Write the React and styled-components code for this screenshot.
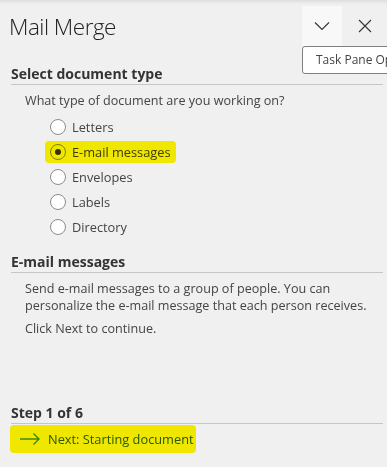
import React from 'react'
import styled, { createGlobalStyle } from 'styled-components'

const GlobalStyle = createGlobalStyle`
  html, body {
    margin: 0;
    padding: 0;
    background: #f0f0f0;
    overflow: hidden;
  }
  body {
    font-family: "Segoe UI", "Open Sans", "Noto Sans", sans-serif;
    color: #444;
  }
`

const Pane = styled.div`
  position: relative;
  width: 387px;
  height: 467px;
  background: #f0f0f0;
  box-shadow: inset 0 4px 4px -3px rgba(0, 0, 0, 0.12);
  display: flex;
  flex-direction: column;
`

const Header = styled.div`
  height: 46px;
  display: flex;
  align-items: flex-end;
`

const Title = styled.h1`
  margin: 0 0 2px 9px;
  flex: 1;
  font-size: 22.5px;
  font-weight: 300;
  line-height: 34px;
  color: #222;
  letter-spacing: -0.5px;
`

const IconButton = styled.button`
  width: ${p => p.$w || 40}px;
  height: 40px;
  border: none;
  padding: 0;
  margin: 0;
  background: ${p => (p.$hover ? '#f8f8f8' : 'transparent')};
  display: flex;
  align-items: center;
  justify-content: center;
  color: #333;
`

const Tooltip = styled.div`
  position: absolute;
  top: 46px;
  left: 302px;
  height: 26px;
  padding: 0 8px 0 13px;
  background: #fff;
  border: 1px solid #808080;
  border-radius: 3px;
  font-size: 12px;
  line-height: 26px;
  color: #444;
  white-space: nowrap;
`

const Section = styled.div`
  padding: 0 4px 0 11px;
  margin-top: ${p => p.$top}px;
`

const Heading = styled.div`
  font-size: 14px;
  font-weight: 700;
  line-height: 18px;
  padding-bottom: 1px;
  color: #333;
  border-bottom: 1px solid #c6c6c6;
`

const Body = styled.div`
  padding-left: 14px;
  font-size: 12.6px;
  line-height: ${p => p.$lh || 16}px;
  margin-top: ${p => p.$top || 0}px;
  color: #444;
`

const Options = styled.div`
  display: flex;
  flex-direction: column;
  margin-top: 5px;
  padding-left: 39px;
`

const Option = styled.label`
  height: 25px;
  display: flex;
  align-items: center;
  gap: 6px;
  font-size: 12.8px;
  color: #444;
`

const Highlight = styled.span`
  display: inline-flex;
  align-items: center;
  gap: ${p => p.$gap || 6}px;
  background: #efe700;
  border-radius: 4px;
  padding: ${p => p.$pad || '2px 5px 2px 5px'};
  margin-left: ${p => p.$ml || -5}px;
  & > * {
    mix-blend-mode: multiply;
  }
`

const Radio = styled.span`
  width: 14px;
  height: 14px;
  border-radius: 50%;
  border: 1px solid #8c8c8c;
  background: #fff;
  display: flex;
  align-items: center;
  justify-content: center;
  flex: none;
  &::after {
    content: '';
    width: 6px;
    height: 6px;
    border-radius: 50%;
    background: ${p => (p.$checked ? '#383838' : 'transparent')};
  }
`

const NextRow = styled.div`
  margin-top: 1px;
  padding-left: 4px;
  height: 27px;
  display: flex;
  align-items: center;
`

const NextText = styled.span`
  font-size: 12.8px;
  color: #2c6418;
`

const options = ['Letters', 'E-mail messages', 'Envelopes', 'Labels', 'Directory']

function Chevron() {
  return (
    <svg width="16" height="10" viewBox="0 0 16 10">
      <path d="M1 1.5 L8 8.5 L15 1.5" fill="none" stroke="#333" strokeWidth="1.1" />
    </svg>
  )
}

function Close() {
  return (
    <svg width="14" height="14" viewBox="0 0 14 14">
      <path d="M1 1 L13 13 M13 1 L1 13" fill="none" stroke="#333" strokeWidth="1.1" />
    </svg>
  )
}

function Arrow() {
  return (
    <svg width="21" height="12" viewBox="0 0 21 12">
      <path d="M0 6 H19 M13.5 0.5 L19 6 L13.5 11.5" fill="none" stroke="#3f9a2a" strokeWidth="1.4" />
    </svg>
  )
}

export default function App() {
  return (
    <Pane>
      <GlobalStyle />
      <Header>
        <Title>Mail Merge</Title>
        <IconButton $hover>
          <Chevron />
        </IconButton>
        <IconButton $w={45}>
          <Close />
        </IconButton>
      </Header>
      <Tooltip>Task Pane Options</Tooltip>

      <Section $top={19}>
        <Heading>Select document type</Heading>
        <Body $top={8}>What type of document are you working on?</Body>
        <Options>
          {options.map(o =>
            o === 'E-mail messages' ? (
              <Option key={o}>
                <Highlight>
                  <Radio $checked />
                  <span>{o}</span>
                </Highlight>
              </Option>
            ) : (
              <Option key={o}>
                <Radio />
                <span>{o}</span>
              </Option>
            )
          )}
        </Options>
      </Section>

      <Section $top={14}>
        <Heading>E-mail messages</Heading>
        <Body $top={7} $lh={17}>
          Send e-mail messages to a group of people. You can personalize the e-mail message that each person receives.
        </Body>
        <Body $top={6} $lh={17}>Click Next to continue.</Body>
      </Section>

      <Section $top={67}>
        <Heading>Step 1 of 6</Heading>
        <NextRow>
          <Highlight $gap={7} $pad="5px 2px 5px 10px" $ml={0}>
            <Arrow />
            <NextText>Next: Starting document</NextText>
          </Highlight>
        </NextRow>
      </Section>
    </Pane>
  )
}
